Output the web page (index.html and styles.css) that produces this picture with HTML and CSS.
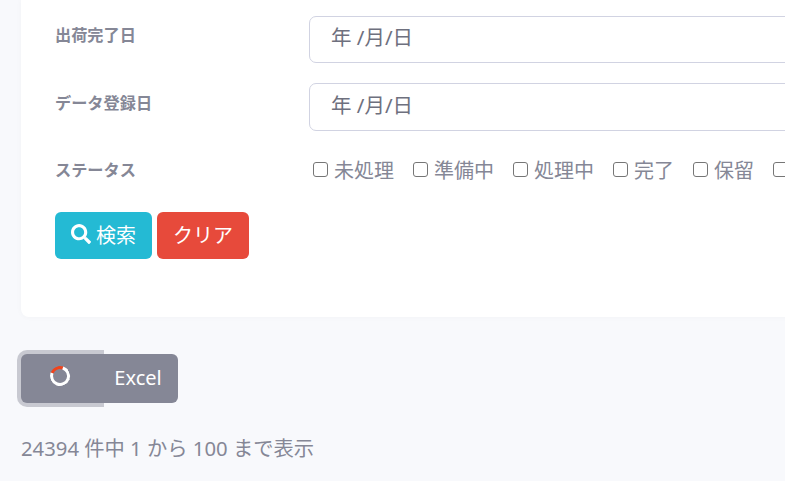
FILE: index.html
```html
<!DOCTYPE html>
<html lang="ja">
<head>
<meta charset="utf-8">
<title>検索</title>
<link rel="stylesheet" href="styles.css">
</head>
<body>
<main class="page">
  <section class="card">
    <div class="row row-date">
      <div class="label">出荷完了日</div>
      <div class="date-field">年 /月/日</div>
    </div>
    <div class="row row-date">
      <div class="label">データ登録日</div>
      <div class="date-field">年 /月/日</div>
    </div>
    <div class="row row-status">
      <div class="label">ステータス</div>
      <div class="checks">
        <label class="check"><input type="checkbox" class="box">未処理</label>
        <label class="check"><input type="checkbox" class="box">準備中</label>
        <label class="check"><input type="checkbox" class="box">処理中</label>
        <label class="check"><input type="checkbox" class="box">完了</label>
        <label class="check"><input type="checkbox" class="box">保留</label>
        <label class="check"><input type="checkbox" class="box"></label>
      </div>
    </div>
    <div class="actions">
      <button class="btn btn-search" type="button">
        <svg class="icon" viewBox="0 0 512 512" aria-hidden="true"><path fill="currentColor" d="M505 442.700L405.300 343c-4.500-4.500-10.600-7-17-7H372c27.600-35.300 44-79.700 44-128C416 93.100 322.900 0 208 0S0 93.100 0 208s93.100 208 208 208c48.300 0 92.700-16.400 128-44v16.300c0 6.400 2.500 12.500 7 17l99.700 99.700c9.400 9.400 24.600 9.400 33.900 0l28.300-28.300c9.400-9.400 9.400-24.600.1-34zM208 336c-70.700 0-128-57.200-128-128 0-70.700 57.200-128 128-128 70.700 0 128 57.200 128 128 0 70.700-57.200 128-128 128z"/></svg>検索
      </button>
      <button class="btn btn-clear" type="button">クリア</button>
    </div>
  </section>
  <div class="export">
    <button class="exp exp-busy" type="button" aria-label="読み込み中"><span class="spinner"></span></button>
    <button class="exp exp-excel" type="button">Excel</button>
  </div>
  <p class="info">24394 件中 1 から 100 まで表示</p>
</main>
</body>
</html>
```
FILE: styles.css
```css
* { box-sizing: border-box; }
html, body {
  margin: 0;
  height: 100%;
  overflow: hidden;
  background: #f8f9fc;
}
body {
  font-family: "Noto Sans", "Noto Sans CJK JP", sans-serif;
  color: #858796;
  font-size: 20px;
}
.page {
  width: 1100px;
  padding-left: 21px;
}
.card {
  background: #fff;
  border-radius: 0 0 8px 8px;
  height: 317px;
  padding: 16px 34px 0;
  box-shadow: 0 0 6px rgba(58, 59, 69, .03);
}
.row {
  display: grid;
  grid-template-columns: 254px 1fr;
}
.row-date { height: 67.400px; }
.row-date + .row-date .label { padding-top: 10px; }
.label {
  font-size: 16.200px;
  font-weight: 700;
  line-height: 20px;
  color: #858796;
  padding-top: 9px;
}
.date-field {
  height: 47.300px;
  border: 1px solid #d1d3e2;
  border-radius: 7px;
  padding-left: 21px;
  font-size: 20.500px;
  line-height: 41px;
  color: #6e707e;
}
.row-date + .row-date .date-field { line-height: 42px; }
.row-status { height: 61.200px; }
.row-status .label { padding-top: 9px; }
.checks {
  display: flex;
  gap: 19px;
  padding: 5px 0 0 4px;
  line-height: 30px;
  height: 35px;
  white-space: nowrap;
}
.check {
  display: flex;
  align-items: center;
  gap: 6px;
  font-size: 20px;
}
.box {
  appearance: none;
  margin: 0 0 2px;
  width: 15px;
  height: 15px;
  border: 1.500px solid #767676;
  border-radius: 3px;
  background: #fff;
}
.actions {
  display: flex;
  gap: 5px;
}
.btn {
  height: 47px;
  border: 0;
  border-radius: 6px;
  color: #fff;
  font: inherit;
  font-size: 20px;
  display: flex;
  align-items: center;
  justify-content: center;
  padding: 0 0 2px;
}
.btn-search { width: 97px; background: #24bad4; gap: 5px; }
.btn-clear { width: 92px; background: #e74a3b; }
.icon { width: 20px; height: 20px; }
.export {
  display: flex;
  margin-top: 37px;
  height: 49px;
}
.exp {
  border: 0;
  color: #fff;
  background: #858796;
  font: inherit;
  display: flex;
  align-items: center;
  justify-content: center;
}
.exp-busy {
  width: 79px;
  padding: 0 1px 5px 0;
  position: relative;
  z-index: 1;
  border-radius: 6px 0 0 6px;
  box-shadow: 0 0 0 4px rgba(133, 135, 150, .42);
}
.exp-excel {
  width: 78px;
  padding: 0 2px 2px 0;
  border-radius: 0 6px 6px 0;
  font-size: 20px;
}
.spinner {
  width: 20px;
  height: 20px;
  border-radius: 50%;
  border: 3px solid #fff;
  border-top-color: #f0441c;
  transform: rotate(-25deg);
}
.info {
  margin: 31px 0 0;
  font-size: 20.300px;
  line-height: 28px;
}
```
